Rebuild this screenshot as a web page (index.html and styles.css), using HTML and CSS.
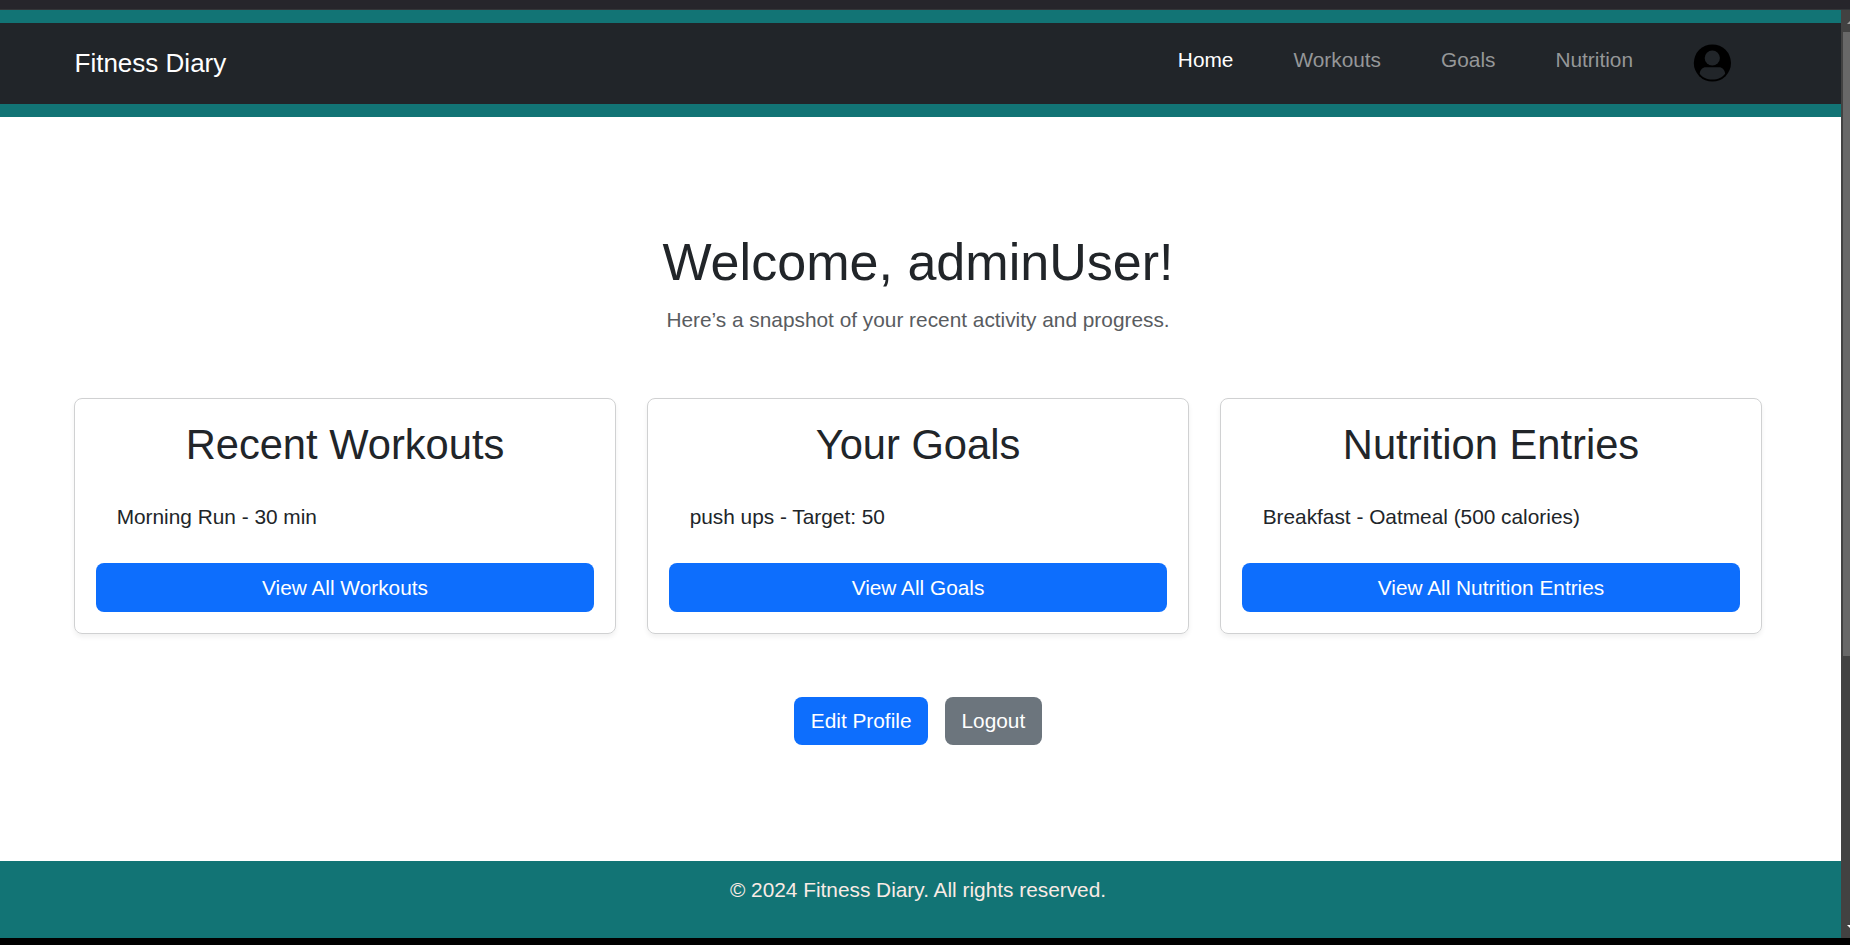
FILE: index.html
```html
<!DOCTYPE html>
<html lang="en">
<head>
<meta charset="utf-8">
<title>Fitness Diary</title>
<link rel="stylesheet" href="styles.css">
</head>
<body>
<div class="window-top"></div>
<div class="viewport">
  <div class="page">
    <header class="header">
      <nav class="navbar">
        <a class="brand">Fitness Diary</a>
        <div class="nav-links">
          <a class="nav-link active">Home</a>
          <a class="nav-link">Workouts</a>
          <a class="nav-link">Goals</a>
          <a class="nav-link">Nutrition</a>
          <svg class="avatar" viewBox="0 0 38 38">
            <circle cx="19.400" cy="19" r="18.600" fill="#000"/>
            <circle cx="19.300" cy="14" r="7.600" fill="#212529"/>
            <path d="M6.700 29.700C7 25.800 9.600 23.300 12.800 23.300H26C29.200 23.300 31.800 25.800 32.100 29.700C29.500 33.600 24.800 35.500 19.400 35.500C14 35.500 9.300 33.600 6.700 29.700Z" fill="#212529"/>
          </svg>
        </div>
      </nav>
    </header>
    <main class="content">
      <h1 class="welcome">Welcome, adminUser!</h1>
      <p class="lead">Here’s a snapshot of your recent activity and progress.</p>
      <div class="cards">
        <section class="card">
          <h2 class="card-title">Recent Workouts</h2>
          <p class="entry">Morning Run - 30 min</p>
          <a class="btn">View All Workouts</a>
        </section>
        <section class="card">
          <h2 class="card-title">Your Goals</h2>
          <p class="entry">push ups - Target: 50</p>
          <a class="btn">View All Goals</a>
        </section>
        <section class="card">
          <h2 class="card-title">Nutrition Entries</h2>
          <p class="entry">Breakfast - Oatmeal (500 calories)</p>
          <a class="btn">View All Nutrition Entries</a>
        </section>
      </div>
      <div class="actions">
        <a class="btn btn-small">Edit Profile</a>
        <a class="btn btn-small btn-secondary">Logout</a>
      </div>
    </main>
    <footer class="footer">© 2024 Fitness Diary. All rights reserved.</footer>
  </div>
  <div class="scrollbar">
    <svg class="arrow" viewBox="0 0 9 22"><path d="M6 14L9 11V14Z" fill="#9f9f9f"/></svg>
    <div class="thumb"></div>
    <svg class="arrow arrow-down" viewBox="0 0 9 22"><path d="M6 9H9V12Z" fill="#fff"/></svg>
  </div>
</div>
<div class="window-bottom"></div>
</body>
</html>
```
FILE: styles.css
```css
* { box-sizing: border-box; }
html { font-size: 20.83px; }
body {
  margin: 0;
  height: 945px;
  display: flex;
  flex-direction: column;
  overflow: hidden;
  font-family: "Liberation Sans", Arial, sans-serif;
  line-height: 1.5;
  color: #212529;
  background: #fff;
}
h1, h2, p { margin: 0; font-weight: 400; }
.window-top { height: 10px; background: #26252b; border-bottom: 1px solid #333538; }
.window-bottom { height: 7px; background: #000; }
.viewport { flex: 1; display: flex; min-height: 0; }
.page { flex: 1; display: flex; flex-direction: column; }
.header { padding: 13px 0; background: #127475; }
.navbar {
  height: 81px;
  padding: 0 110px 0 74.5px;
  display: flex;
  align-items: center;
  justify-content: space-between;
  background: #212529;
}
.brand { font-size: 1.25rem; color: #fff; }
.nav-links { display: flex; align-items: center; gap: 60px; }
.nav-link { padding-bottom: 8px; color: #959798; }
.nav-link.active { color: #fff; }
.avatar { width: 38px; height: 38px; }
.content { flex: 1; padding: 113.5px 79px 0 74px; }
.welcome { font-size: 2.5rem; line-height: 1.2; text-align: center; margin-bottom: 11.4px; }
.lead { text-align: center; color: #595c5f; margin-bottom: 3rem; }
.cards { display: grid; grid-template-columns: repeat(3, 1fr); gap: 31px; }
.card {
  display: flex;
  flex-direction: column;
  height: 236px;
  padding: 1rem;
  border: 1px solid #d0d1d2;
  border-radius: 8px;
  box-shadow: 0 3px 5px rgba(0, 0, 0, .06);
}
.card-title { font-size: 2rem; line-height: 1.2; text-align: center; margin-bottom: 1rem; }
.entry { padding: .5rem 1rem; margin-bottom: 20px; }
.btn {
  height: 49px;
  display: flex;
  align-items: center;
  justify-content: center;
  border-radius: 8px;
  color: #fff;
  background: #0d6efd;
}
.actions { display: flex; justify-content: center; gap: 17px; margin-top: 63px; }
.btn-small { height: 48px; padding: 0 16.5px; }
.btn-secondary { background: #6c757d; }
.footer { height: 77px; padding: 13px 5px 0 0; text-align: center; color: #f9ebe5; background: #127475; }
.scrollbar { width: 9px; display: flex; flex-direction: column; background: #424242; }
.arrow { width: 9px; height: 22px; }
.arrow-down { margin-top: auto; }
.thumb { height: 624px; margin-left: 2px; background: #686868; }
```
